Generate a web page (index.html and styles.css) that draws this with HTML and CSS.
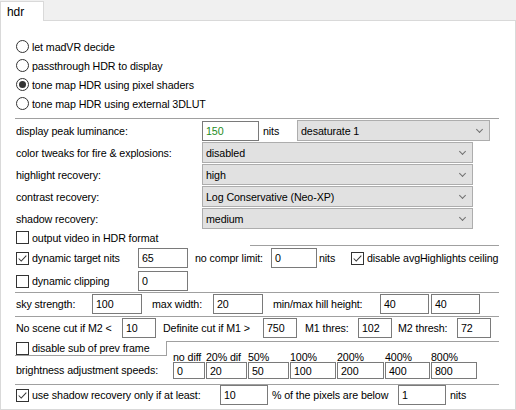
FILE: index.html
```html
<!DOCTYPE html>
<html>

<head>
    <meta charset="UTF-8">
    <title>hdr</title>
    <link rel="stylesheet" href="styles.css">
</head>

<body>
    <div class="tabbar">
        <div class="tab">hdr</div>
        <div class="tabfill"></div>
    </div>

    <div class="panel">
        <div class="radios">
            <div class="radio"><span class="circle"></span>let madVR decide</div>
            <div class="radio"><span class="circle"></span>passthrough HDR to display</div>
            <div class="radio"><span class="circle checked"></span>tone map HDR using pixel shaders</div>
            <div class="radio"><span class="circle"></span>tone map HDR using external 3DLUT</div>
        </div>

        <div class="sep"></div>

        <div class="row combo-row">
            <span class="lbl lbl-combo">display peak luminance:</span>
            <span class="edit edit-peak green">150</span>
            <span class="lbl lbl-nits">nits</span>
            <span class="combo combo-short">desaturate 1</span>
        </div>
        <div class="row combo-row">
            <span class="lbl lbl-combo">color tweaks for fire &amp; explosions:</span>
            <span class="combo">disabled</span>
        </div>
        <div class="row combo-row">
            <span class="lbl lbl-combo">highlight recovery:</span>
            <span class="combo">high</span>
        </div>
        <div class="row combo-row">
            <span class="lbl lbl-combo">contrast recovery:</span>
            <span class="combo">Log Conservative (Neo-XP)</span>
        </div>
        <div class="row combo-row">
            <span class="lbl lbl-combo">shadow recovery:</span>
            <span class="combo">medium</span>
        </div>

        <div class="row out-row">
            <span class="check"><span class="box"></span>output video in HDR format</span>
            <span class="part-rule"></span>
        </div>

        <div class="row edit-row target-row">
            <span class="check lbl-dyn"><span class="box"><svg viewBox="0 0 13 13"><polyline points="2,6.5 5,9.5 11,3" /></svg></span>dynamic target nits</span>
            <span class="edit edit-dyn">65</span>
            <span class="lbl lbl-compr">no compr limit:</span>
            <span class="edit edit-compr">0</span>
            <span class="lbl lbl-nits2">nits</span>
            <span class="check"><span class="box"><svg viewBox="0 0 13 13"><polyline points="2,6.5 5,9.5 11,3" /></svg></span>disable avgHighlights ceiling</span>
        </div>
        <div class="row edit-row clip-row">
            <span class="check lbl-dyn"><span class="box"></span>dynamic clipping</span>
            <span class="edit edit-dyn">0</span>
        </div>

        <div class="sep sep-tight"></div>

        <div class="row edit-row sky-row">
            <span class="lbl lbl-sky">sky strength:</span>
            <span class="edit edit-sky">100</span>
            <span class="lbl lbl-width">max width:</span>
            <span class="edit edit-sky">20</span>
            <span class="lbl lbl-hill">min/max hill height:</span>
            <span class="edit edit-hill">40</span>
            <span class="edit edit-hill hill-2">40</span>
        </div>

        <div class="sep sep-scene"></div>

        <div class="row edit-row scene-row">
            <span class="lbl lbl-m2">No scene cut if M2 &lt;</span>
            <span class="edit edit-cut">10</span>
            <span class="lbl lbl-m1">Definite cut if M1 &gt;</span>
            <span class="edit edit-cut">750</span>
            <span class="lbl lbl-thres">M1 thres:</span>
            <span class="edit edit-cut">102</span>
            <span class="lbl lbl-thresh">M2 thresh:</span>
            <span class="edit edit-cut">72</span>
        </div>

        <div class="subgroup">
            <div class="sub-left">
                <span class="check"><span class="box"></span>disable sub of prev frame</span>
            </div>
            <div class="sub-right"></div>
        </div>

        <div class="speeds">
            <span class="lbl speeds-label">brightness adjustment speeds:</span>
            <div class="speed s32"><span class="speed-head">no diff</span><span class="edit edit-speed">0</span></div>
            <div class="speed s41"><span class="speed-head">20% dif</span><span class="edit edit-speed">20</span></div>
            <div class="speed s41"><span class="speed-head">50%</span><span class="edit edit-speed">50</span></div>
            <div class="speed s46"><span class="speed-head">100%</span><span class="edit edit-speed">100</span></div>
            <div class="speed s47"><span class="speed-head">200%</span><span class="edit edit-speed">200</span></div>
            <div class="speed s45"><span class="speed-head">400%</span><span class="edit edit-speed">400</span></div>
            <div class="speed s46"><span class="speed-head">800%</span><span class="edit edit-speed">800</span></div>
        </div>

        <div class="sep sep-speeds"></div>

        <div class="row edit-row">
            <span class="check lbl-shadow"><span class="box"><svg viewBox="0 0 13 13"><polyline points="2,6.5 5,9.5 11,3" /></svg></span>use shadow recovery only if at least:</span>
            <span class="edit edit-pct">10</span>
            <span class="lbl lbl-pixels">% of the pixels are below</span>
            <span class="edit edit-pct">1</span>
            <span class="lbl lbl-nits3">nits</span>
        </div>
    </div>
</body>

</html>
```

FILE: styles.css
```css
:root {
    --page: #f0f0f0;
    --panel: #ffffff;
    --tab-border: #d9d9d9;
    --rule: #a0a0a0;
    --edit-border: #7a7a7a;
    --combo-bg: #e1e1e1;
    --combo-border: #adadad;
    --control: #333333;
    --text: #000000;
}

body {
    margin: 0;
    width: 516px;
    height: 410px;
    background-color: var(--page);
    color: var(--text);
    font-family: "Liberation Sans", Arial, sans-serif;
    font-size: 10.7px;
    letter-spacing: -0.1px;
    overflow: hidden;
}

/* Tabs */
.tabbar {
    display: flex;
    height: 21px;
}

.tab {
    width: 44px;
    height: 20px;
    margin-top: 1px;
    box-sizing: border-box;
    border: 1px solid var(--tab-border);
    border-bottom: none;
    background-color: var(--panel);
    padding: 3px 0 0 6px;
    font-size: 12px;
}

.tabfill {
    flex: 1;
    border-bottom: 1px solid var(--tab-border);
}

.panel {
    height: 389px;
    box-sizing: border-box;
    border: 1px solid var(--tab-border);
    border-top: none;
    background-color: var(--panel);
    padding: 16px 16px 0 14px;
}

/* Radios */
.radio {
    display: flex;
    align-items: center;
    gap: 3px;
    height: 19px;
    padding-left: 1px;
}

.circle {
    width: 13px;
    height: 13px;
    box-sizing: border-box;
    border: 1px solid var(--control);
    border-radius: 50%;
    display: flex;
    align-items: center;
    justify-content: center;
}

.circle.checked::after {
    content: "";
    width: 7px;
    height: 7px;
    border-radius: 50%;
    background-color: var(--control);
}

/* Separators */
.sep {
    height: 1px;
    background-color: var(--rule);
    margin: 5px 0 1px;
}

.sep-tight {
    margin: 1px 0 1px;
}

.sep-scene {
    margin: 2px 0 1px;
}

.sep-speeds {
    margin: 5px 0 0;
}

.part-rule {
    align-self: stretch;
    flex: 1;
    margin-left: 92px;
    border-bottom: 1px solid var(--rule);
}

/* Rows */
.row {
    display: flex;
    align-items: center;
}

.lbl {
    white-space: nowrap;
    min-width: 0;
    flex-shrink: 0;
}

.combo-row {
    height: 21px;
}

.combo-row+.combo-row {
    margin-top: 1px;
}

.lbl-combo {
    width: 186px;
    padding-left: 1px;
}

.lbl-nits {
    width: 34px;
    margin-left: 4px;
    box-sizing: border-box;
}

.combo {
    width: 271px;
    height: 21px;
    box-sizing: border-box;
    border: 1px solid var(--combo-border);
    background-color: var(--combo-bg);
    padding-left: 3px;
    display: flex;
    align-items: center;
    justify-content: space-between;
}

.combo::after {
    content: "";
    width: 4px;
    height: 4px;
    border-right: 1px solid #707070;
    border-bottom: 1px solid #707070;
    transform: rotate(45deg);
    margin: 0 7px 3px 0;
}

.combo-short {
    width: 193px;
}

.edit {
    height: 20px;
    box-sizing: border-box;
    border: 1px solid var(--edit-border);
    background-color: var(--panel);
    padding-left: 3px;
    display: flex;
    align-items: center;
    flex-shrink: 0;
}

.green {
    color: #1e8c1e;
}

.edit-peak {
    width: 57px;
}

/* Checkboxes */
.check {
    display: flex;
    align-items: center;
    gap: 3px;
    padding-left: 1px;
    white-space: nowrap;
    min-width: 0;
    flex-shrink: 0;
}

.box {
    width: 13px;
    height: 13px;
    box-sizing: border-box;
    border: 1px solid var(--control);
    background-color: var(--panel);
    flex-shrink: 0;
}

.box svg {
    display: block;
    width: 11px;
    height: 11px;
    fill: none;
    stroke: var(--control);
    stroke-width: 1.2;
}

.out-row {
    height: 17px;
}

.edit-row {
    height: 20px;
}

.target-row {
    margin-top: 2px;
}

.clip-row {
    margin-top: 3px;
}

.lbl-dyn {
    width: 122px;
}

.edit-dyn {
    width: 50px;
}

.lbl-compr {
    width: 76px;
    margin-left: 7px;
}

.edit-compr {
    width: 46px;
}

.lbl-nits2 {
    width: 31px;
    margin-left: 2px;
}

/* Sky row */
.sky-row,
.scene-row {
    margin-top: 1px;
}

.lbl-sky {
    width: 76px;
    padding-left: 1px;
}

.edit-sky {
    width: 50px;
}

.lbl-width {
    width: 61px;
    margin-left: 10px;
}

.lbl-hill {
    width: 107px;
    margin-left: 10px;
}

.edit-hill {
    width: 49px;
}

.hill-2 {
    margin-left: 2px;
}

/* Scene cut row */
.lbl-m2 {
    width: 106px;
    padding-left: 1px;
}

.edit-cut {
    width: 34px;
}

.lbl-m1 {
    width: 100px;
    margin-left: 7px;
}

.lbl-thres {
    width: 53px;
    margin-left: 8px;
}

.lbl-thresh {
    width: 59px;
    margin-left: 6px;
}

/* Sub frame group */
.subgroup {
    display: flex;
    height: 15px;
    margin-top: 3px;
}

.sub-left {
    width: 151px;
    box-sizing: border-box;
    border-bottom: 1px solid var(--rule);
    display: flex;
    align-items: center;
}

.sub-right {
    flex: 1;
    border-top: 1px solid var(--rule);
    border-left: 1px solid var(--rule);
}

/* Speeds */
.speeds {
    display: flex;
    align-items: flex-end;
    gap: 1px;
    margin-top: -4px;
}

.speeds-label {
    width: 156px;
    padding-left: 1px;
    height: 17px;
    line-height: 17px;
}

.speed {
    display: flex;
    flex-direction: column;
}

.speed-head {
    height: 10px;
    line-height: 10px;
    white-space: nowrap;
}

.edit-speed {
    height: 17px;
}

.s32 { width: 32px; }
.s41 { width: 41px; }
.s45 { width: 45px; }
.s46 { width: 46px; }
.s47 { width: 47px; }

/* Shadow row */
.lbl-shadow {
    width: 204px;
}

.edit-pct {
    width: 48px;
}

.lbl-pixels {
    width: 126px;
    margin-left: 4px;
}

.lbl-nits3 {
    margin-left: 4px;
}
```
